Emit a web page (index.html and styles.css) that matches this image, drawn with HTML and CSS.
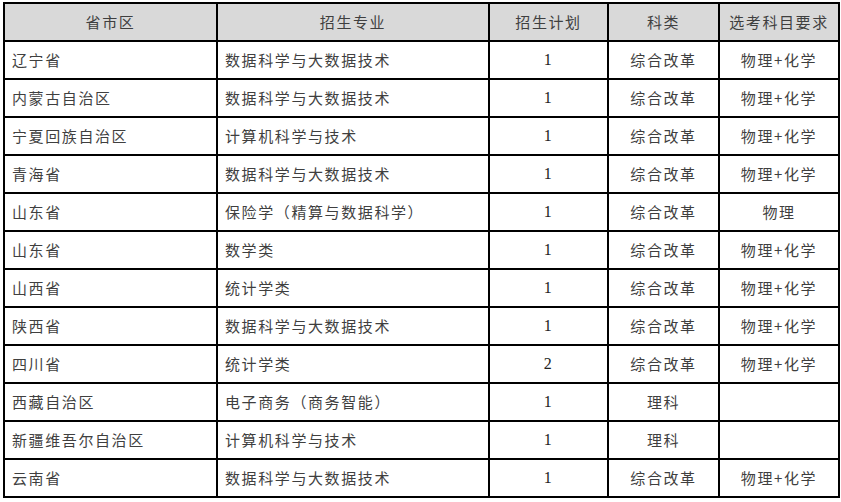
FILE: index.html
```html
<!DOCTYPE html>
<html lang="zh">
<head>
<meta charset="utf-8">
<link rel="stylesheet" href="styles.css">
</head>
<body>
<div class="wrap">
<table class="grid">
<colgroup>
<col class="c1"><col class="c2"><col class="c3"><col class="c4"><col class="c5">
</colgroup>
<thead>
<tr><th>省市区</th><th>招生专业</th><th>招生计划</th><th>科类</th><th>选考科目要求</th></tr>
</thead>
<tbody>
<tr><td class="l">辽宁省</td><td class="l">数据科学与大数据技术</td><td class="n">1</td><td>综合改革</td><td>物理+化学</td></tr>
<tr><td class="l">内蒙古自治区</td><td class="l">数据科学与大数据技术</td><td class="n">1</td><td>综合改革</td><td>物理+化学</td></tr>
<tr><td class="l">宁夏回族自治区</td><td class="l">计算机科学与技术</td><td class="n">1</td><td>综合改革</td><td>物理+化学</td></tr>
<tr><td class="l">青海省</td><td class="l">数据科学与大数据技术</td><td class="n">1</td><td>综合改革</td><td>物理+化学</td></tr>
<tr><td class="l">山东省</td><td class="l">保险学（精算与数据科学）</td><td class="n">1</td><td>综合改革</td><td>物理</td></tr>
<tr><td class="l">山东省</td><td class="l">数学类</td><td class="n">1</td><td>综合改革</td><td>物理+化学</td></tr>
<tr><td class="l">山西省</td><td class="l">统计学类</td><td class="n">1</td><td>综合改革</td><td>物理+化学</td></tr>
<tr><td class="l">陕西省</td><td class="l">数据科学与大数据技术</td><td class="n">1</td><td>综合改革</td><td>物理+化学</td></tr>
<tr><td class="l">四川省</td><td class="l">统计学类</td><td class="n">2</td><td>综合改革</td><td>物理+化学</td></tr>
<tr><td class="l">西藏自治区</td><td class="l">电子商务（商务智能）</td><td class="n">1</td><td>理科</td><td></td></tr>
<tr><td class="l">新疆维吾尔自治区</td><td class="l">计算机科学与技术</td><td class="n">1</td><td>理科</td><td></td></tr>
<tr><td class="l">云南省</td><td class="l">数据科学与大数据技术</td><td class="n">1</td><td>综合改革</td><td>物理+化学</td></tr>
</tbody>
</table>
</div>
</body>
</html>
```

FILE: styles.css
```css
html, body {
  margin: 0;
  padding: 0;
  background: #fff;
}
.wrap {
  padding: 2px 0 0 3px;
}
.grid {
  border-collapse: collapse;
  table-layout: fixed;
  width: 835px;
  font-family: "Noto Sans CJK SC", "Noto Sans", sans-serif;
  font-size: 15px;
  color: #3f3f3f;
}
.c1 { width: 213px; }
.c2 { width: 272px; }
.c3 { width: 119px; }
.c4 { width: 111px; }
.c5 { width: 120px; }
.grid th, .grid td {
  border: 2px solid #000;
  height: 36px;
  padding: 0 4px;
  text-align: center;
  vertical-align: middle;
  letter-spacing: 1.6px;
  font-weight: normal;
  white-space: nowrap;
  line-height: 20px;
}
.grid th {
  background: #d9d9d9;
}
.grid td.l {
  text-align: left;
  padding-left: 7px;
}
.grid td.n {
  font-family: "Liberation Serif", serif;
  font-size: 16px;
  color: #222;
}
```
